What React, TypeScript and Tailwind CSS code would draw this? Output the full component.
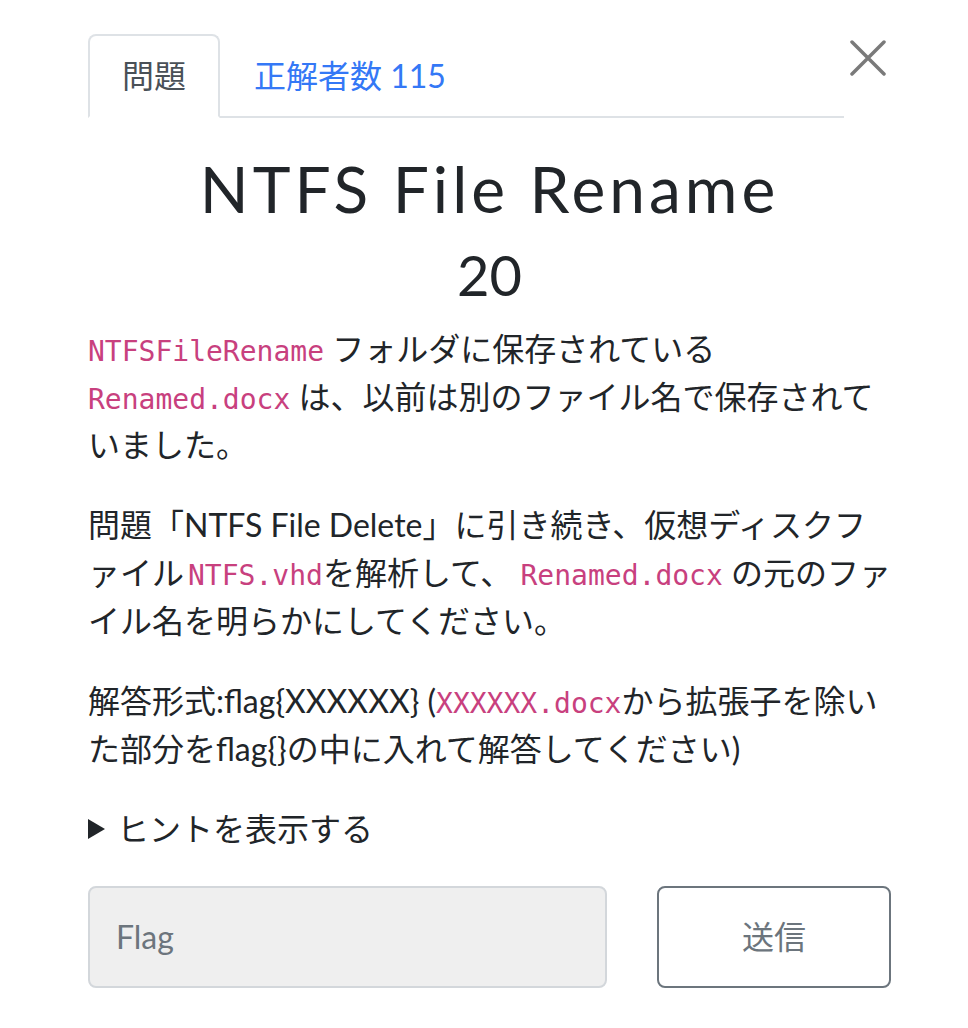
import React from "react"

const code = "font-['DejaVu_Sans_Mono',monospace] text-[28px] leading-none text-[#c8407e]"

function CloseIcon() {
    return (
        <svg width="36" height="36" viewBox="0 0 36 36" fill="none">
            <path d="M2 2 L34 34 M34 2 L2 34" stroke="#7a7a7a" strokeWidth="3.5" strokeLinecap="round" />
        </svg>
    )
}

export default function App() {
    return (
        <div className="bg-white font-['Lato','Noto_Sans_CJK_JP',sans-serif] text-[#212529] pl-[88px] pr-[77px] pt-[34px] pb-[30px]">
            {/* Header: tabs + close */}
            <div className="flex items-start">
                <ul className="flex flex-1 border-b-2 border-[#dee2e6]">
                    <li className="-mb-[2px] px-[32px] py-[16px] border-2 border-[#dee2e6] border-b-white rounded-t-[8px] text-[32px] leading-[48px] text-[#495057]">
                        問題
                    </li>
                    <li className="-mb-[2px] px-[32px] py-[16px] border-2 border-transparent text-[32px] leading-[48px] text-[#3478f6]">
                        正解者数 115
                    </li>
                </ul>
                <button className="w-[47px] h-[47px] flex items-center justify-center pl-[1px]">
                    <CloseIcon />
                </button>
            </div>

            {/* Challenge body */}
            <div className="pt-[33px]">
                <h2 className="text-center text-[64px] leading-[1.2] tracking-[4px] mb-[13px]">NTFS File Rename</h2>
                <h3 className="text-center text-[56px] leading-[1.2] mb-[17px]">20</h3>

                <div className="text-[32px] leading-[48px]">
                    <p className="mb-[32px]">
                        <code className={code}>NTFSFileRename</code> フォルダに保存されている <code className={code}>Renamed.docx</code> は、以前は別のファイル名で保存されていました。
                    </p>
                    <p className="mb-[32px]">
                        問題「NTFS File Delete」に引き続き、仮想ディスクファイル<code className={`${code} ml-[4px]`}>NTFS.vhd</code>を解析して、 <code className={code}>Renamed.docx</code> の元のファイル名を明らかにしてください。
                    </p>
                    <p className="mb-[32px]">
                        解答形式:flag{"{XXXXXX}"} (<code className={code}>XXXXXX.docx</code>から拡張子を除いた部分をflag{"{}"}の中に入れて解答してください)
                    </p>
                    <div className="flex items-center gap-[12px] mb-[33px]">
                        <svg width="17" height="20" viewBox="0 0 17 20">
                            <path d="M0 0 L17 10 L0 20 Z" fill="#212529" />
                        </svg>
                        <span>ヒントを表示する</span>
                    </div>
                </div>

                {/* Submit form */}
                <div className="flex items-center justify-between">
                    <div className="w-[519px] h-[102px] flex items-center px-[26px] bg-[#efefef] border-2 border-[#d3d7db] rounded-[8px] text-[32px] text-[#6c757d]">
                        Flag
                    </div>
                    <button className="w-[234px] h-[102px] border-2 border-[#6c757d] rounded-[8px] text-[32px] text-[#6c757d] bg-white">
                        送信
                    </button>
                </div>
            </div>
        </div>
    )
}
